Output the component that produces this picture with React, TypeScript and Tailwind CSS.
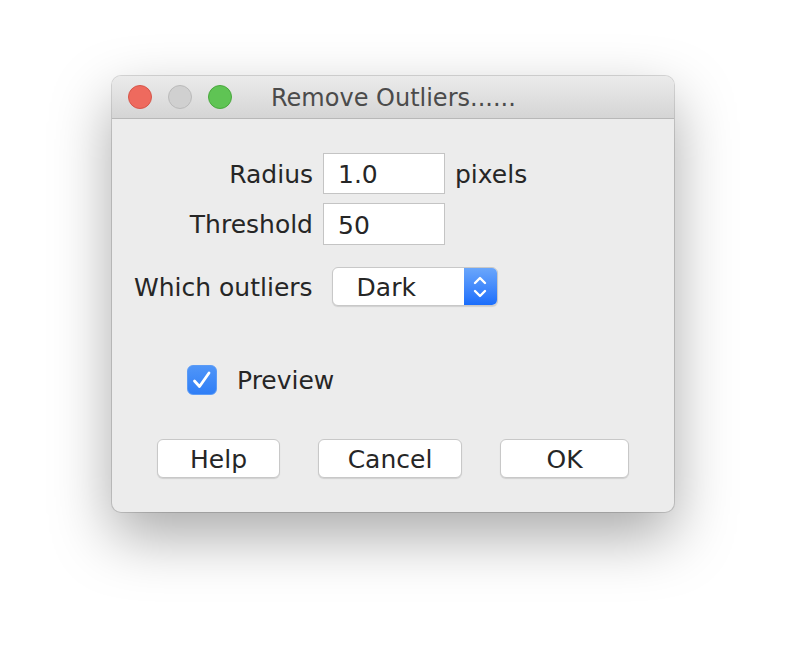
import React, { useState } from "react";

const font = { fontFamily: '"DejaVu Sans", "Liberation Sans", sans-serif' };

function TrafficLight({ color, border }: { color: string; border: string }) {
  return <span className={`h-[24px] w-[24px] rounded-full border ${color} ${border}`} />;
}

function Button({ label, width }: { label: string; width: string }) {
  return (
    <button
      className={`${width} h-[39px] rounded-[6px] border border-[#c8c8c8] bg-white pt-[1px] text-[25px] leading-none text-[#262626] shadow-[0_1px_1px_rgba(0,0,0,0.12)]`}
    >
      {label}
    </button>
  );
}

export default function App() {
  const [preview, setPreview] = useState(true);

  return (
    <div className="flex h-[660px] w-full justify-center bg-white pt-[76px]" style={font}>
      <div className="flex h-[436px] w-[562px] flex-col overflow-hidden rounded-[9px] bg-[#ececec] shadow-[0_0_0_1px_rgba(0,0,0,0.14),0_24px_60px_rgba(0,0,0,0.34)]">
        {/* title bar */}
        <div className="relative flex h-[43px] shrink-0 items-center border-b border-[#b8b8b8] bg-gradient-to-b from-[#ebebeb] to-[#d5d5d5]">
          <div className="flex items-center gap-[16px] pl-[16px]">
            <TrafficLight color="bg-[#ee6a5e]" border="border-[#d5564a]" />
            <TrafficLight color="bg-[#d0d0d0]" border="border-[#bababa]" />
            <TrafficLight color="bg-[#5fc454]" border="border-[#4aa73e]" />
          </div>
          <span className="ml-[39px] pt-[2px] text-[24px] text-[#4b4b4b]">Remove Outliers......</span>
        </div>

        {/* body */}
        <div className="flex flex-col pt-[34px] text-[25px] text-[#262626]">
          <div className="flex h-[41px] items-center">
            <span className="w-[201px] pt-[2px] text-right">Radius</span>
            <input
              readOnly
              value="1.0"
              className="ml-[10px] h-[41px] w-[122px] border border-[#c4c4c4] bg-white pl-[14px] pt-[2px] text-[25px] text-[#262626] outline-none"
            />
            <span className="ml-[10px] pt-[2px]">pixels</span>
          </div>
          <div className="mt-[9px] flex h-[42px] items-center">
            <span className="w-[201px] pt-[2px] text-right">Threshold</span>
            <input
              readOnly
              value="50"
              className="ml-[10px] h-[42px] w-[122px] border border-[#c4c4c4] bg-white pl-[14px] pt-[2px] text-[25px] text-[#262626] outline-none"
            />
          </div>
          <div className="mt-[22px] flex h-[39px] items-center">
            <span className="ml-[22px] pt-[2px]">Which outliers</span>
            <div className="ml-[19px] flex h-[39px] w-[166px] overflow-hidden rounded-[6px] border border-[#c8c8c8] bg-white shadow-[0_1px_1px_rgba(0,0,0,0.12)]">
              <span className="flex flex-1 items-center pl-[24px] pt-[2px]">Dark</span>
              <span className="flex w-[33px] items-center justify-center bg-gradient-to-b from-[#6aa6fb] to-[#1a6dfb]">
                <svg width="16" height="26" viewBox="0 0 16 26" fill="none" stroke="white" strokeWidth="2.4" strokeLinecap="round" strokeLinejoin="round">
                  <path d="M3 9 L8 4 L13 9" />
                  <path d="M3 17 L8 22 L13 17" />
                </svg>
              </span>
            </div>
          </div>

          <div className="mt-[59px] flex h-[30px] items-center pl-[75px]">
            <button
              onClick={() => setPreview(!preview)}
              className="flex h-[30px] w-[30px] items-center justify-center rounded-[6px] border border-[#5b9bf6] bg-gradient-to-b from-[#4f95f8] to-[#2f7ef6]"
            >
              {preview && (
                <svg width="22" height="22" viewBox="0 0 22 22" fill="none" stroke="white" strokeWidth="2.8" strokeLinecap="round" strokeLinejoin="round">
                  <path d="M3.5 12 L8.5 17.5 L18 4" />
                </svg>
              )}
            </button>
            <span className="ml-[20px] pt-[2px]">Preview</span>
          </div>

          <div className="mt-[44px] flex items-center pl-[45px]">
            <Button label="Help" width="w-[123px]" />
            <div className="ml-[38px]">
              <Button label="Cancel" width="w-[144px]" />
            </div>
            <div className="ml-[38px]">
              <Button label="OK" width="w-[129px]" />
            </div>
          </div>
        </div>
      </div>
    </div>
  );
}
